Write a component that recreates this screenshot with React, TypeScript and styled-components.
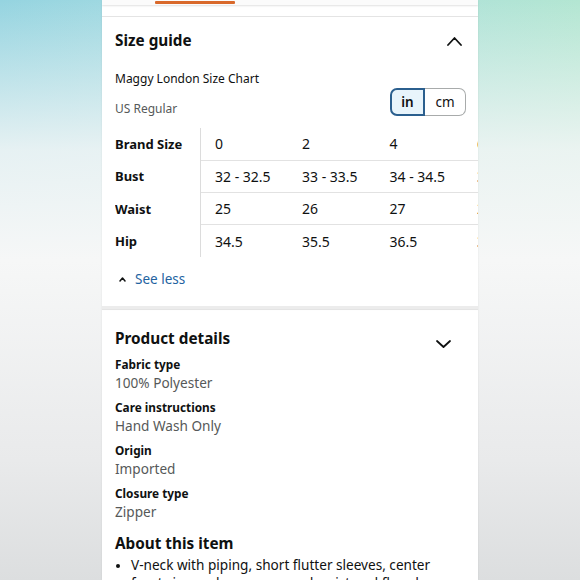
import React from "react";
import styled, { createGlobalStyle } from "styled-components";

const GlobalStyle = createGlobalStyle`
  html, body {
    margin: 0;
    padding: 0;
  }
  body {
    font-family: "Noto Sans", "Open Sans", Arial, sans-serif;
    color: #0f1111;
    width: 580px;
    height: 580px;
    overflow: hidden;
    background:
      linear-gradient(to bottom, rgba(244, 246, 246, 0) 0px, rgba(244, 246, 246, 0.85) 150px, #f6f7f7 260px, #e9eaeb 460px, #dcdedf 580px),
      linear-gradient(to right, #95d4e0 0%, #a9dde2 40%, #b3e6d2 100%);
  }
`;

const sizes = [
  { label: "Brand Size", values: ["0", "2", "4", "6"] },
  { label: "Bust", values: ["32 - 32.5", "33 - 33.5", "34 - 34.5", "35 - 35.5"] },
  { label: "Waist", values: ["25", "26", "27", "28"] },
  { label: "Hip", values: ["34.5", "35.5", "36.5", "37.5"] },
];

const details = [
  { name: "Fabric type", value: "100% Polyester" },
  { name: "Care instructions", value: "Hand Wash Only" },
  { name: "Origin", value: "Imported" },
  { name: "Closure type", value: "Zipper" },
];

const Chevron: React.FC<{ up?: boolean; w: number; h: number; stroke?: number }> = ({
  up,
  w,
  h,
  stroke = 1.8,
}) => (
  <svg width={w} height={h} viewBox={`0 0 ${w} ${h}`} fill="none">
    <path
      d={up ? `M1 ${h - 1} L${w / 2} 1 L${w - 1} ${h - 1}` : `M1 1 L${w / 2} ${h - 1} L${w - 1} 1`}
      stroke="#0f1111"
      strokeWidth={stroke}
      strokeLinecap="round"
      strokeLinejoin="round"
    />
  </svg>
);

const App: React.FC = () => {
  return (
    <>
      <GlobalStyle />
      <Page>
        <Phone>
          <TabStrip>
            <TabIndicator />
          </TabStrip>

          <Section>
            <SectionHeader>
              <SectionTitle>Size guide</SectionTitle>
              <IconSlot $right={16}>
                <Chevron up w={15} h={9} />
              </IconSlot>
            </SectionHeader>

            <ChartName>Maggy London Size Chart</ChartName>
            <ChartMeta>
              <MetaText>US Regular</MetaText>
              <UnitToggle>
                <UnitButton $active>in</UnitButton>
                <UnitButton>cm</UnitButton>
              </UnitToggle>
            </ChartMeta>

            <TableWrap>
              <SizeTable>
                <tbody>
                  {sizes.map((row, i) => (
                    <tr key={row.label}>
                      <RowLabel>{row.label}</RowLabel>
                      {row.values.map((v, j) => (
                        <Cell key={j} $last={i === sizes.length - 1}>
                          {v}
                        </Cell>
                      ))}
                    </tr>
                  ))}
                </tbody>
              </SizeTable>
            </TableWrap>

            <SeeLess>
              <Chevron up w={7} h={5} stroke={1.5} />
              <span>See less</span>
            </SeeLess>
          </Section>

          <Separator />

          <Section $top={19}>
            <SectionHeader>
              <SectionTitle>Product details</SectionTitle>
              <IconSlot $right={27} $top={5}>
                <Chevron w={15} h={8} />
              </IconSlot>
            </SectionHeader>
            <DetailList>
              {details.map((d) => (
                <Detail key={d.name}>
                  <DetailName>{d.name}</DetailName>
                  <DetailValue>{d.value}</DetailValue>
                </Detail>
              ))}
            </DetailList>

            <AboutTitle>About this item</AboutTitle>
            <Bullets>
              <li>V-neck with piping, short flutter sleeves, center front zipper closure, seamed waist and flared skirt</li>
            </Bullets>
          </Section>
        </Phone>
      </Page>
    </>
  );
};

export default App;

const Page = styled.div`
  display: flex;
  justify-content: center;
  height: 580px;
`;

const Phone = styled.div`
  width: 376px;
  height: 580px;
  background: #ffffff;
  overflow: hidden;
  box-shadow: 0 0 2px rgba(0, 0, 0, 0.08);
`;

const TabStrip = styled.div`
  position: relative;
  height: 5px;
  background: #fbfbfb;
  box-shadow: 0 1px 2px rgba(0, 0, 0, 0.12);
  margin-bottom: 11px;
`;

const TabIndicator = styled.div`
  position: absolute;
  left: 53px;
  top: 1px;
  width: 80px;
  height: 3px;
  background: #d9692b;
  border-radius: 1px;
`;

const Section = styled.div<{ $top?: number }>`
  border-top: 1px solid #e4e4e4;
  padding: ${(p) => p.$top ?? 14}px 0 0 13px;
`;

const SectionHeader = styled.div`
  position: relative;
  display: flex;
  align-items: center;
  height: 18px;
`;

const SectionTitle = styled.h2`
  margin: 0;
  font-size: 15.3px;
  font-weight: 700;
  line-height: 18px;
  color: #0f1111;
`;

const IconSlot = styled.div<{ $right: number; $top?: number }>`
  position: absolute;
  right: ${(p) => p.$right}px;
  top: ${(p) => 6 + (p.$top ?? 0)}px;
  display: flex;
`;

const ChartName = styled.div`
  margin-top: 21px;
  font-size: 12px;
  line-height: 18px;
`;

const ChartMeta = styled.div`
  display: flex;
  align-items: center;
  justify-content: space-between;
  padding-right: 12px;
  margin-top: 4px;
`;

const MetaText = styled.div`
  font-size: 12px;
  color: #565959;
  line-height: 18px;
  margin-top: 8px;
`;

const UnitToggle = styled.div`
  display: flex;
  height: 28px;
  margin-top: -6px;
`;

const UnitButton = styled.div<{ $active?: boolean }>`
  display: flex;
  align-items: center;
  justify-content: center;
  font-size: 13.5px;
  box-sizing: border-box;
  ${(p) =>
    p.$active
      ? `
    width: 35px;
    background: #e8f4fb;
    border: 2px solid #2b5f8e;
    border-radius: 7px 0 0 7px;
    font-weight: 600;
  `
      : `
    width: 41px;
    background: #ffffff;
    border: 1px solid #a8abab;
    border-left: none;
    border-radius: 0 7px 7px 0;
  `}
`;

const TableWrap = styled.div`
  margin-top: 10px;
  overflow: hidden;
`;

const SizeTable = styled.table`
  border-collapse: collapse;
  table-layout: fixed;
  width: calc(85px + 4 * 87.5px);
`;

const RowLabel = styled.th`
  width: 85px;
  height: 32.3px;
  padding: 0;
  text-align: left;
  font-size: 13px;
  font-weight: 700;
  border-right: 1px solid #dcdcdc;
`;

const Cell = styled.td<{ $last?: boolean }>`
  width: 87.5px;
  height: 32.3px;
  padding: 0 0 0 14px;
  box-sizing: border-box;
  font-size: 14px;
  white-space: nowrap;
  border-bottom: ${(p) => (p.$last ? "none" : "1px solid #e2e2e2")};
`;

const SeeLess = styled.div`
  display: flex;
  align-items: center;
  gap: 9px;
  margin: 12px 0 0 4px;
  height: 20px;
  font-size: 13.5px;
  color: #22629f;

  svg path {
    stroke: #0f1111;
  }
`;

const Separator = styled.div`
  height: 3px;
  margin-top: 17px;
  background: #ececec;
  box-shadow: 0 1px 1px rgba(0, 0, 0, 0.05);
`;

const DetailList = styled.div`
  margin-top: 9px;
  display: flex;
  flex-direction: column;
  gap: 7px;
`;

const Detail = styled.div`
  display: flex;
  flex-direction: column;
`;

const DetailName = styled.div`
  font-size: 11.8px;
  font-weight: 700;
  line-height: 17px;
`;

const DetailValue = styled.div`
  font-size: 13.6px;
  color: #565959;
  line-height: 19px;
`;

const AboutTitle = styled.h2`
  margin: 12px 0 0;
  font-size: 15.3px;
  font-weight: 700;
  line-height: 20px;
`;

const Bullets = styled.ul`
  margin: 3px 34px 0 0;
  padding-left: 16px;
  font-size: 13.6px;
  line-height: 18px;
  color: #0f1111;

  li::marker {
    font-size: 12px;
  }
`;
